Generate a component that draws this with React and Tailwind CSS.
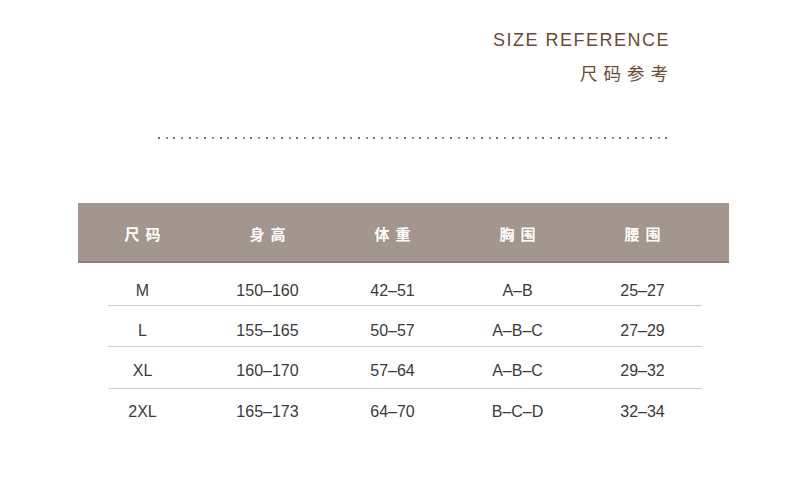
import React from "react";

const rows = [
  { h: "h-[43px]", pt: "pt-[18px]", b: true, c: ["M", "150–160", "42–51", "A–B", "25–27"] },
  { h: "h-[41px]", pt: "pt-[15px]", b: true, c: ["L", "155–165", "50–57", "A–B–C", "27–29"] },
  { h: "h-[42px]", pt: "pt-[14px]", b: true, c: ["XL", "160–170", "57–64", "A–B–C", "29–32"] },
  { h: "h-[40px]", pt: "pt-[13px]", b: false, c: ["2XL", "165–173", "64–70", "B–C–D", "32–34"] },
];
const heads = ["尺码", "身高", "体重", "胸围", "腰围"];

export default function App() {
  const dots = Array.from({ length: 67 });
  return (
    <div className="w-[790px] h-[493px] bg-white flex flex-col font-['Liberation_Sans','Noto_Sans_CJK_SC',sans-serif]">
      <div className="flex flex-col items-end pt-[30px] pr-[120px] text-[#6b4a35]">
        <div className="h-[20px] leading-[20px] text-[18px] tracking-[1.5px]">SIZE REFERENCE</div>
        <div className="mt-[13px] -mr-[4px] h-[20px] leading-[20px] text-[17.5px] tracking-[6px] font-['Noto_Sans_CJK_SC',sans-serif]">尺码参考</div>
      </div>
      <div className="mt-[54px] ml-[158px] w-[510px] h-[2px] flex justify-between">
        {dots.map((_, i) => (
          <span key={i} className={"w-[2px] h-[2px] " + (i % 2 ? "bg-[#a0826e]" : "bg-[#8a6a55]")} />
        ))}
      </div>
      <div className="mt-[64px] ml-[78px] w-[651px]">
        <div className="h-[60px] pt-[4px] bg-[#a2968e] border-b-2 border-[#8e7e74] grid grid-cols-[125px_125px_125px_125px_125px] pl-[2px] items-center">
          {heads.map((h) => (
            <div key={h} className="text-center text-white font-bold text-[15px] tracking-[6px] pl-[6px] font-['Noto_Sans_CJK_SC',serif]">
              {h}
            </div>
          ))}
        </div>
        <div className="ml-[30px] w-[594px]">
          {rows.map((r, i) => (
            <div key={i} className={r.h + " " + r.pt + " " + (r.b ? "border-b border-[#cfcfcf]" : "")}>
              <div className="-ml-[28px] grid grid-cols-[125px_125px_125px_125px_125px] text-[16px] leading-[20px] text-[#3a3a3a]">
                {r.c.map((c, j) => (
                  <div key={j} className="text-center">{c}</div>
                ))}
              </div>
            </div>
          ))}
        </div>
      </div>
    </div>
  );
}
